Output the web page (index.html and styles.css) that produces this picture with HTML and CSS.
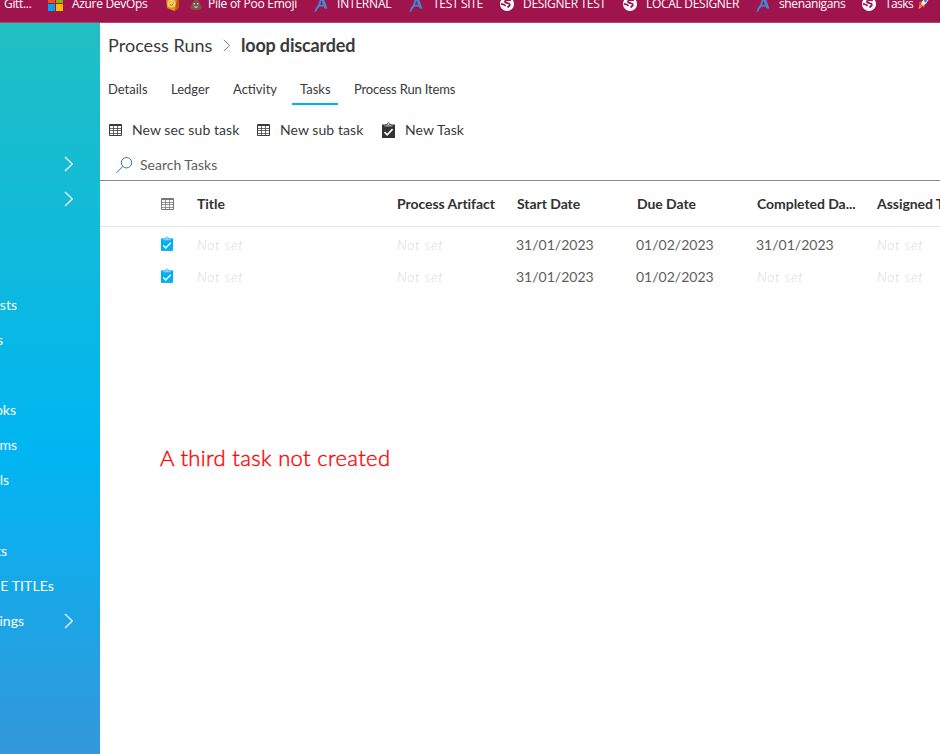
FILE: index.html
```html
<!DOCTYPE html>
<html lang="en">
<head>
<meta charset="utf-8">
<title>Process Runs</title>
<link rel="stylesheet" href="styles.css">
</head>
<body>
<svg class="defs" width="0" height="0">
  <symbol id="grid" viewBox="0 0 13 12"><path fill="none" stroke="currentColor" d="M.5.5h12v11H.5zM0 1.500h13"/><path fill="none" stroke="currentColor" stroke-opacity=".75" d="M1 4.500h11M1 6.500h11M1 9.500h11M4.500 2v9M8.500 2v9"/></symbol>
  <symbol id="clip" viewBox="0 0 13 16"><path fill="currentColor" d="M0 2.500h13V16H0z"/><path fill="#fff" fill-opacity=".55" d="M2.500 2.500h8v2h-8z"/><path fill="none" stroke="currentColor" stroke-opacity=".75" d="M3.300 3.500V2.700h1.900Q5.200.8 6.500.8t1.300 1.900h1.900v.8"/><path fill="none" stroke="#fff" stroke-width="1.700" d="M2.500 10.200l2.700 2.600 5.400-5.600"/></symbol>
  <symbol id="chev" viewBox="0 0 10 16"><path fill="none" stroke="currentColor" stroke-width="1.200" d="M1 1l7.300 7L1 15"/></symbol>
  <symbol id="logo" viewBox="0 0 14 14"><path fill="#4486cf" d="M6.500 0h3l4 10.500h-2.800L9.600 8.600H5.800Q3.500 10 2.200 13.500L.4 14Q1 10 4 7zM7.600 2.500L6 6.800h3z"/></symbol>
  <symbol id="globe" viewBox="0 0 14 14"><circle cx="7" cy="7" r="7" fill="#fff"/><path fill="none" stroke="#a0144e" stroke-width="1.800" d="M11 3.200Q6.500 2.500 5 4.300q0 1.700 2.500 1.800Q10.500 6.500 9.500 8.800 8.500 9.500 7.500 10.500M1 6.800q3 .3 4.600 2.200"/></symbol>
</svg>
<header class="bookmarks">
  <span class="mark m1">Gitt...</span>
  <svg class="ico" width="15" height="14"><path fill="#f25022" d="M0 0h7v6H0z"/><path fill="#7fba00" d="M8 0h7v6H8z"/><path fill="#00a4ef" d="M0 7h7v7H0z"/><path fill="#ffb900" d="M8 7h7v7H8z"/></svg>
  <span class="mark m2">Azure DevOps</span>
  <svg class="ico" width="14" height="14"><path fill="#ec8b1c" d="M1 1h12v11L9 14 2 11z"/><path fill="#c4500f" d="M12 1h2v10l-4 3z"/><circle cx="6.500" cy="6.500" r="4" fill="#ffd76a"/><path fill="none" stroke="#a4500a" d="M4.500 7q2 3 4 0M5 4.500v1M8 4.500v1"/></svg>
  <svg class="ico poo" width="12" height="12"><path fill="#7d5146" d="M6 0q3 1 2.500 4 2 .5 2 3Q12 8 12 10q-1 2-6 2T0 10q0-2 1.500-3 0-2.500 2-3Q4 2 6 0"/><path fill="#e9dedb" d="M3.500 5h1.500v1.500H3.500zM7 5h1.500v1.500H7zM3.500 8.500h5Q6 11 3.500 8.500"/></svg>
  <span class="mark m3">Pile of Poo Emoji</span>
  <svg class="ico low" width="14" height="14"><use href="#logo"/></svg>
  <span class="mark m4">INTERNAL</span>
  <svg class="ico low" width="14" height="14"><use href="#logo"/></svg>
  <span class="mark m5">TEST SITE</span>
  <svg class="ico" width="14" height="14"><use href="#globe"/></svg>
  <span class="mark m6">DESIGNER TEST</span>
  <svg class="ico" width="14" height="14"><use href="#globe"/></svg>
  <span class="mark m7">LOCAL DESIGNER</span>
  <svg class="ico low" width="14" height="14"><use href="#logo"/></svg>
  <span class="mark m8">shenanigans</span>
  <svg class="ico" width="14" height="14"><use href="#globe"/></svg>
  <span class="mark m9">Tasks</span>
  <svg class="ico" width="11" height="12"><path fill="#e8443a" d="M1 5l3-1 3 4-1 3-2-2-3 3z"/><path fill="#e6edf2" d="M3 7Q5 1 11 0q0 5-6 9z"/><circle cx="7.500" cy="3.800" r="1.400" fill="#3b7fc0"/><path fill="#f7a11b" d="M2 8l2 2-4 2z"/></svg>
</header>
<div class="app">
  <nav class="side">
    <div class="row"><span class="lab" style="width:64px"></span><svg width="10" height="16"><use href="#chev"/></svg></div>
    <div class="row"><span class="lab" style="width:64px"></span><svg width="10" height="16"><use href="#chev"/></svg></div>
    <div class="row"></div>
    <div class="row"></div>
    <div class="row"><span class="lab" style="width:17px">sts</span></div>
    <div class="row"><span class="lab" style="width:3px">s</span></div>
    <div class="row"></div>
    <div class="row"><span class="lab" style="width:16px">oks</span></div>
    <div class="row"><span class="lab" style="width:17px">ms</span></div>
    <div class="row"><span class="lab" style="width:9px">ls</span></div>
    <div class="row"></div>
    <div class="row"><span class="lab" style="width:7px">ts</span></div>
    <div class="row"><span class="lab wide" style="width:54px">E TITLEs</span></div>
    <div class="row"><span class="lab" style="width:24px">ings</span><svg class="last" width="10" height="16"><use href="#chev"/></svg></div>
  </nav>
  <main class="main">
    <div class="crumbs"><span class="parent">Process Runs</span><svg width="8" height="13" viewBox="0 0 10 16"><use href="#chev"/></svg><strong>loop discarded</strong></div>
    <div class="tabs"><span class="t1">Details</span><span class="t2">Ledger</span><span class="t3">Activity</span><span class="t4 active">Tasks</span><span class="t5">Process Run Items</span></div>
    <div class="commands">
      <svg class="cells" width="13" height="12"><use href="#grid"/></svg><span class="c1">New sec sub task</span>
      <svg class="cells" width="13" height="12"><use href="#grid"/></svg><span class="c2">New sub task</span>
      <svg class="dark" width="13" height="16"><use href="#clip"/></svg><span class="c3">New Task</span>
    </div>
    <div class="search"><svg width="17" height="17"><g fill="none" stroke="#2e6fd0"><circle cx="10.500" cy="5.700" r="5.200"/><path d="M6.700 9.500L.4 16"/></g></svg><span>Search Tasks</span></div>
    <div class="grid head"><svg width="13" height="12"><use href="#grid"/></svg><b>Title</b><b>Process Artifact</b><b>Start Date</b><b>Due Date</b><b>Completed Da...</b><b>Assigned To</b></div>
    <div class="grid body"><svg class="blue" width="12" height="15"><use href="#clip"/></svg><i>Not set</i><i>Not set</i><span>31/01/2023</span><span>01/02/2023</span><span>31/01/2023</span><i>Not set</i></div>
    <div class="grid body"><svg class="blue" width="12" height="15"><use href="#clip"/></svg><i>Not set</i><i>Not set</i><span>31/01/2023</span><span>01/02/2023</span><i>Not set</i><i>Not set</i></div>
    <p class="note">A third task not created</p>
  </main>
</div>
</body>
</html>
```
FILE: styles.css
```css
* { box-sizing: border-box; }
body { margin: 0; width: 940px; height: 754px; overflow: hidden; background: #fff; font-family: Lato, sans-serif; color: #3a3a3a; }
svg { flex: none; display: block; }
.defs { position: absolute; }
.bookmarks { height: 23px; background: #a0144e; border-bottom: 1px solid #b34271; display: flex; align-items: flex-start; overflow: hidden; color: #fff; font: 12px/16px "Open Sans", sans-serif; letter-spacing: -.32px; white-space: nowrap; }
.mark { flex: none; margin-top: -4px; }
.ico { margin-top: -3px; }
.low { margin-top: -2px; }
.poo { margin: -2px 6px 0 11px; }
.m1 { width: 48px; padding-left: 4px; }
.m2 { width: 102px; padding-left: 9px; }
.m3 { width: 106px; letter-spacing: -.25px; }
.m4 { width: 81px; padding-left: 9px; letter-spacing: -.2px; }
.m5 { width: 77px; padding-left: 10px; }
.m6 { width: 109px; padding-left: 9px; letter-spacing: -.3px; }
.m7 { width: 119px; padding-left: 9px; letter-spacing: -.3px; }
.m8 { width: 92px; padding-left: 9px; letter-spacing: -.38px; }
.m9 { width: 42px; padding-left: 9px; letter-spacing: -.6px; }
.app { display: flex; height: 731px; }
.side { flex: none; width: 100px; padding-top: 123px; background: linear-gradient(180deg, #20bfc2 0%, #00b5f2 59%, #3498db 100%); color: #fff; font-size: 14px; }
.row { height: 35.150px; display: flex; align-items: center; }
.lab { flex: none; display: flex; justify-content: flex-end; overflow: hidden; white-space: nowrap; }
.wide { letter-spacing: .1px; }
.last { margin: 1px 0 0 40px; }
.main { flex: none; width: 840px; overflow: hidden; white-space: nowrap; }
.crumbs { display: flex; align-items: center; height: 46px; padding: 0 0 2px 8px; font-size: 18px; }
.crumbs svg { margin: 0 10px 0 11px; color: #777; }
.parent { width: 104px; letter-spacing: .04px; }
.crumbs strong { font-weight: 700; letter-spacing: -.18px; }
.tabs { display: flex; height: 36px; font-size: 13px; line-height: 40px; }
.tabs span { height: 36px; }
.t1 { margin-left: 8px; width: 63px; }
.t2 { width: 62px; }
.t3 { width: 59px; }
.t4 { width: 46px; padding-left: 8px; margin-right: 16px; }
.t5 { letter-spacing: -.17px; }
.active { border-bottom: 2px solid #00b0f0; }
.commands { display: flex; align-items: center; height: 50px; padding-left: 9px; font-size: 14px; letter-spacing: .07px; }
.commands span { margin-top: -2px; }
.cells { margin-right: 1px; }
.c1 { width: 134px; padding-left: 9px; }
.c2 { width: 111px; padding-left: 9px; }
.c3 { padding-left: 10px; }
.search { display: flex; align-items: center; gap: 7px; height: 26px; padding: 0 0 6px 16px; border-bottom: 1px solid #8a8886; font-size: 14px; color: #605e5c; }
.search svg { margin-top: 1px; }
.search span { margin-top: -1px; }
.grid { display: grid; grid-template-columns: 36px 200px 120px 120px 120px 120px 120px; padding-left: 61px; align-items: center; font-size: 14px; }
.head { height: 46px; border-bottom: 1px solid #e6e6e6; color: #323130; }
.head svg { color: #777; }
.head b { font-weight: 700; letter-spacing: -.05px; }
.body { height: 32px; color: #605e5c; }
.body span { margin: -2px 0 0 -1px; }
.body i { margin-top: -2px; font-weight: 300; letter-spacing: .7px; color: #d8d8d8; }
.body svg { margin-top: -3px; }
.body:nth-last-child(3) { margin-top: 2px; }
.dark { color: #333; }
.blue { color: #00b0f0; }
.note { margin: 151px 0 0 60px; font-size: 22px; font-weight: 300; line-height: 28px; letter-spacing: .36px; color: #f00; -webkit-text-stroke: .4px #f00; }
```
